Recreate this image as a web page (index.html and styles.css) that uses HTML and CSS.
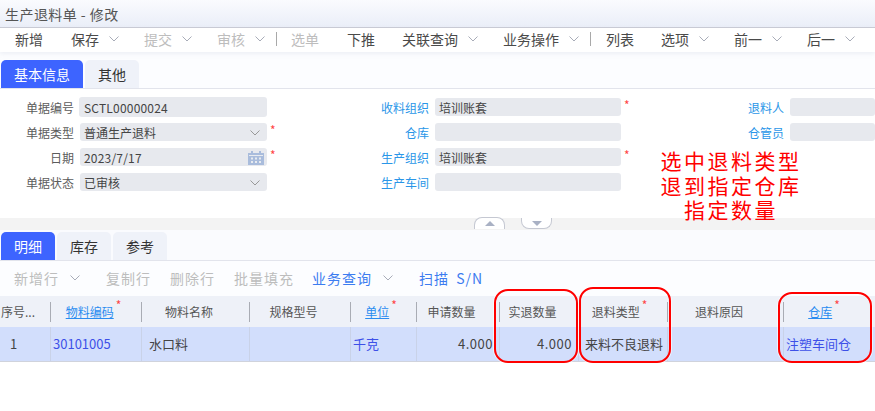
FILE: index.html
```html
<!DOCTYPE html>
<html lang="zh-CN">
<head>
<meta charset="utf-8">
<title>生产退料单 - 修改</title>
<link rel="stylesheet" href="styles.css">
</head>
<body>
<svg class="defs" width="0" height="0"><symbol id="chev" viewBox="0 0 12 8"><path d="M1.500 1.500 6 6l4.500-4.500" fill="none" stroke="currentColor" stroke-width="1"/></symbol></svg>
<header class="title">生产退料单 - 修改</header>
<nav class="toolbar">
  <span class="tool">新增</span>
  <span class="tool caret">保存<svg class="chev"><use href="#chev"/></svg></span>
  <span class="tool caret off">提交<svg class="chev"><use href="#chev"/></svg></span>
  <span class="tool caret off">审核<svg class="chev"><use href="#chev"/></svg></span>
  <i class="sep"></i>
  <span class="tool off">选单</span>
  <span class="tool tight">下推</span>
  <span class="tool caret">关联查询<svg class="chev"><use href="#chev"/></svg></span>
  <span class="tool caret">业务操作<svg class="chev"><use href="#chev"/></svg></span>
  <i class="sep sep-wide"></i>
  <span class="tool tight">列表</span>
  <span class="tool caret">选项<svg class="chev"><use href="#chev"/></svg></span>
  <span class="tool caret">前一<svg class="chev"><use href="#chev"/></svg></span>
  <span class="tool caret">后一<svg class="chev"><use href="#chev"/></svg></span>
</nav>
<div class="tabs top-tabs">
  <span class="tab active wide">基本信息</span><span class="tab">其他</span>
</div>
<section class="form">
  <label class="lab">单据编号</label><div class="field latin">SCTL00000024</div><span class="req"></span>
  <label class="lab link">收料组织</label><div class="field">培训账套</div><span class="req">*</span>
  <label class="lab link">退料人</label><div class="field"></div>

  <label class="lab">单据类型</label><div class="field sel">普通生产退料<svg class="chev"><use href="#chev"/></svg></div><span class="req">*</span>
  <label class="lab link">仓库</label><div class="field"></div><span class="req"></span>
  <label class="lab link">仓管员</label><div class="field"></div>

  <label class="lab">日期</label><div class="field sel latin">2023/7/17
    <svg class="cal" viewBox="0 0 16 14"><path d="M0 2h16v12H0z" fill="#a9bcdc"/><path d="M3 0h2v3H3zM11 0h2v3h-2z" fill="#a9bcdc"/><path d="M1 4h14v1H1z" fill="#e8ebf0"/><path d="M3 6.500h2v2H3zM7 6.500h2v2H7zM11 6.500h2v2h-2zM3 10h2v2H3zM7 10h2v2H7zM11 10h2v2h-2z" fill="#e8ebf0"/></svg>
  </div><span class="req">*</span>
  <label class="lab link">生产组织</label><div class="field">培训账套</div><span class="req">*</span>
  <span></span><span></span>

  <label class="lab">单据状态</label><div class="field sel">已审核<svg class="chev"><use href="#chev"/></svg></div><span class="req"></span>
  <label class="lab link">生产车间</label><div class="field"></div>
</section>
<div class="splitter">
  <span class="handle up"><i></i></span><span class="handle down"><i></i></span>
</div>
<div class="tabs sub-tabs">
  <span class="tab active">明细</span><span class="tab">库存</span><span class="tab">参考</span>
</div>
<nav class="subbar">
  <span class="sub off">新增行<svg class="chev"><use href="#chev"/></svg></span>
  <span class="sub off s1">复制行</span>
  <span class="sub off s1">删除行</span>
  <span class="sub off s2">批量填充</span>
  <span class="sub blue">业务查询<svg class="chev gray"><use href="#chev"/></svg></span>
  <span class="sub blue s4">扫描 S/N</span>
</nav>
<section class="grid">
  <div class="hd first">序号...</div>
  <div class="hd star"><u>物料编码</u><b>*</b></div>
  <div class="hd">物料名称</div>
  <div class="hd">规格型号</div>
  <div class="hd star"><u>单位</u><b>*</b></div>
  <div class="hd">申请数量</div>
  <div class="hd wide-pad">实退数量</div>
  <div class="hd mid">退料类型<b>*</b></div>
  <div class="hd wide-pad">退料原因</div>
  <div class="hd last"><u>仓库</u><b>*</b></div>

  <div class="td idx">1</div>
  <div class="td ref">30101005</div>
  <div class="td name">水口料</div>
  <div class="td"></div>
  <div class="td ref">千克</div>
  <div class="td num">4.000</div>
  <div class="td num">4.000</div>
  <div class="td name-tight">来料不良退料</div>
  <div class="td"></div>
  <div class="td ref">注塑车间仓</div>
</section>
<p class="note">选中退料类型<br>退到指定仓库<br>指定数量</p>
<i class="ring r1"></i><i class="ring r2"></i><i class="ring r3"></i>
</body>
</html>
```
FILE: styles.css
```css
* { box-sizing: border-box; }
html, body { margin: 0; padding: 0; }
body {
  width: 875px; height: 411px; overflow: hidden; position: relative; background: #fff;
  font: 12px/1 "Noto Sans CJK SC", "Noto Sans", sans-serif; color: #444;
}
.defs { position: absolute; }
.title {
  height: 28px; padding: 0 0 0 5px; display: flex; align-items: center;
  font-size: 14px; letter-spacing: .45px; color: #555; background: linear-gradient(#fafbfe, #eaeef8);
  border-bottom: 1px solid #c9cbd4;
}
.toolbar {
  height: 24px; display: flex; align-items: center; padding: 0 0 2px 15px;
  font-size: 14px; color: #4a4a4a; background: #fff; position: relative;
  box-shadow: 0 2px 4px rgba(200, 205, 220, .25);
}
.tool { display: flex; align-items: center; margin-right: 28px; flex: none; }
.tool.tight { margin-right: 27px; }
.tool.caret { margin-right: 24px; }
.off { color: #bdbdbd; }
.chev { width: 12px; height: 8px; margin-left: 9px; color: #a8acb8; }
.sep { width: 1px; height: 14px; background: #a9a9a9; margin: 0 14px 0 -14px; flex: none; }
.sep.sep-wide { margin-right: 15px; }
.tabs { display: flex; gap: 2px; align-items: flex-end; background: #fcfdff; border-bottom: 1px solid #e2e4ec; padding-left: 1px; }
.top-tabs { height: 37px; }
.sub-tabs { height: 31px; background: #fafbfe; padding-bottom: 0; }
.tab {
  width: 54px; height: 28px; display: flex; align-items: center; justify-content: center;
  font-size: 14px; color: #333; background: #eff2f9; border-radius: 5px 5px 0 0;
}
.tab.wide { width: 82px; }
.tab.active { background: #3d64ff; color: #fff; }
.form {
  height: 129px; padding-top: 8px; display: grid;
  grid-template-columns: 74px 193px 14px 148px 192px 14px 149px 91px;
  grid-auto-rows: 20px; row-gap: 5px; align-items: center;
}
.lab { text-align: right; color: #5c5c5c; padding-top: 1px; }
.lab.link { color: #2a96e8; }
.lab + .field { margin-left: 6px; }
.field {
  height: 18px; background: #e7e9ee; border-radius: 3px; padding: 2px 0 0 4px; color: #444;
  display: flex; align-items: center; justify-content: flex-start;
}
.latin { letter-spacing: .2px; }
.form > .field:first-of-type { height: 20px; margin-left: 5px; padding-left: 5px; }
.sel { justify-content: space-between; padding-right: 3px; }
.sel .chev { color: #999; margin: 0 3px 0 0; }
.cal { width: 16px; height: 14px; }
.req { color: #f44; font-size: 12px; padding-left: 3px; margin-top: -4px; }
.splitter { height: 12px; background: #f3f3f3; position: relative; }
.handle {
  position: absolute; width: 31px; background: #fff; border: 1px solid #c5c8d2;
  display: flex; align-items: center; justify-content: center;
}
.handle.up { left: 474px; top: -1px; height: 12px; border-bottom: 0; border-radius: 8px 8px 0 0; }
.handle.down { left: 521px; top: 0; height: 11px; border-top: 0; border-radius: 0 0 8px 8px; }
.handle i { width: 0; height: 0; border-left: 5px solid transparent; border-right: 5px solid transparent; }
.up i { border-bottom: 5px solid #a9b1c4; }
.down i { border-top: 5px solid #a9b1c4; }
.subbar {
  height: 35px; display: flex; align-items: center; padding: 0 0 1px 14px; background: #fcfdff;
  font-size: 14px; letter-spacing: 1px;
}
.sub { display: flex; align-items: center; flex: none; }
.sub .chev { margin-left: 10px; margin-right: 25px; }
.s1 { margin-right: 19px; }
.s2 { margin-right: 18px; }
.s4 { word-spacing: 3px; }
.blue { color: #3c7cf0; }
.grid {
  display: grid; grid-template-columns: 50px 91px 108px 101px 66px 83px 79px 89px 116px 92px;
  grid-template-rows: 31px 35px; background: #eef1f8;
}
.hd {
  display: flex; align-items: center; justify-content: center; position: relative; color: #555;
  padding-right: 12px;
}
.hd::before {
  content: ""; position: absolute; left: 0; top: 6px; height: 20px; width: 1px; background: #a9acb4;
}
.hd.first { justify-content: flex-start; padding-left: 1px; padding-right: 0; }
.hd.first::before, .hd.mid::before { display: none; }
.hd.star { padding-right: 4px; }
.hd.mid { padding-right: 6px; }
.hd.wide-pad { padding-right: 12px; }
.hd.last { padding-right: 10px; }
.hd u { color: #2a8cf0; }
.hd b { color: #f44; font-weight: 400; align-self: flex-start; margin: 3px 0 0 2px; line-height: 12px; }
.td {
  background: #d2defc; border-bottom: 1px solid #d0d3dc; border-left: 1px solid #c9d2e8;
  display: flex; align-items: center; padding: 0 3px 2px; color: #444; font-size: 13px;
}
.idx { border-left: 0; padding-left: 10px; }
.ref { color: #3d50e8; padding-left: 2px; }
.num { justify-content: flex-end; padding-right: 6px; letter-spacing: .5px; }
.name { padding-left: 7px; }
.name-tight { padding-left: 6px; }
.note {
  position: absolute; left: 650px; top: 150px; width: 162px; margin: 0;
  text-align: center; color: #f00; font: 21px/24.500px "Liberation Sans", "Noto Sans CJK SC", sans-serif;
  letter-spacing: 2.500px;
}
.ring { position: absolute; border: 2px solid #f00; border-radius: 14px; box-shadow: 0 0 0 1px rgba(255, 255, 255, .6); }
.r1 { left: 494px; top: 289px; width: 84px; height: 74px; }
.r2 { left: 579px; top: 287px; width: 92px; height: 76px; }
.r3 { left: 778px; top: 292px; width: 94px; height: 71px; }
```
